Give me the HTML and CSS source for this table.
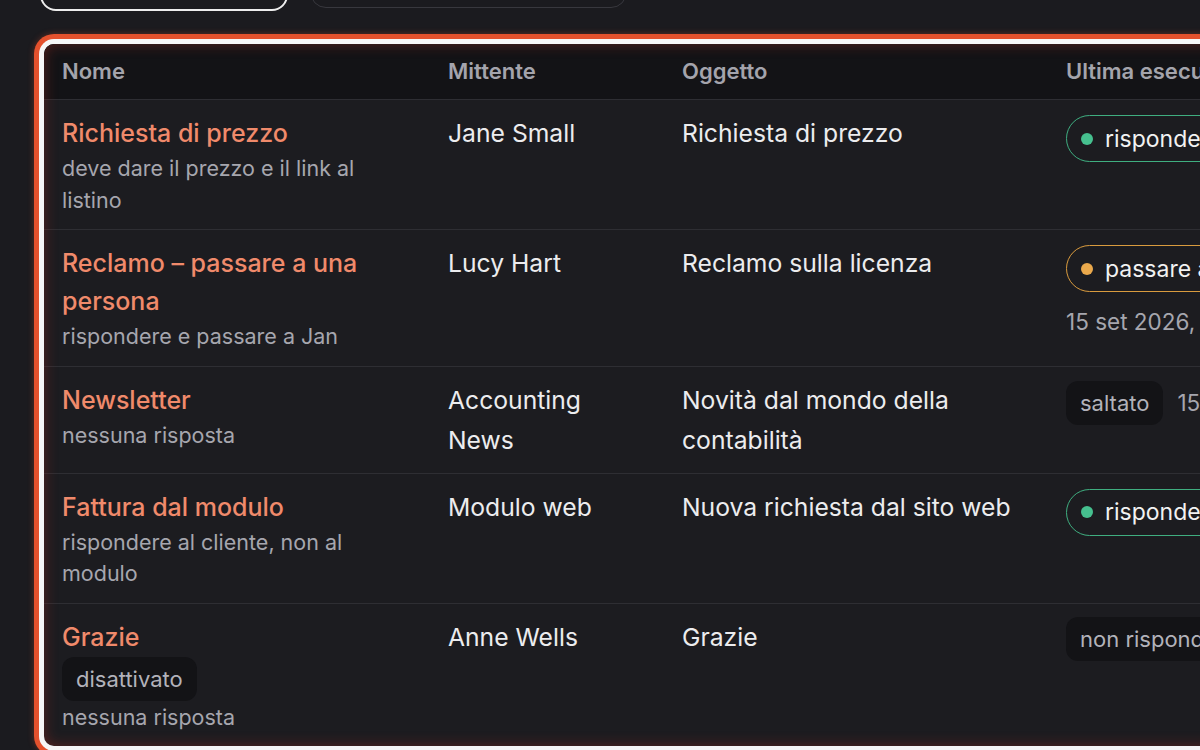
FILE: index.html
```html
<!DOCTYPE html>
<html lang="it">
<head>
<meta charset="utf-8">
<title>Regole</title>
<link rel="stylesheet" href="styles.css">
</head>
<body>
<div class="toolbar">
  <button class="tab tab-active" type="button">Regole</button>
  <button class="tab tab-plain" type="button">Cronologia</button>
</div>
<div class="card">
  <table class="rules">
    <colgroup>
      <col class="c-name"><col class="c-from"><col class="c-subj"><col class="c-last">
    </colgroup>
    <thead>
      <tr><th>Nome</th><th>Mittente</th><th>Oggetto</th><th>Ultima esecuzione</th></tr>
    </thead>
    <tbody>
      <tr>
        <td><div class="title">Richiesta di prezzo</div><div class="sub">deve dare il prezzo e il link al listino</div></td>
        <td>Jane Small</td>
        <td>Richiesta di prezzo</td>
        <td class="last"><span class="pill pill-green"><span class="dot"></span>rispondere</span></td>
      </tr>
      <tr>
        <td><div class="title">Reclamo – passare a una persona</div><div class="sub">rispondere e passare a Jan</div></td>
        <td>Lucy Hart</td>
        <td>Reclamo sulla licenza</td>
        <td class="last"><span class="pill pill-amber"><span class="dot"></span>passare a una persona</span><div class="date">15 set 2026, 10:42</div></td>
      </tr>
      <tr>
        <td><div class="title">Newsletter</div><div class="sub">nessuna risposta</div></td>
        <td>Accounting News</td>
        <td>Novità dal mondo della contabilità</td>
        <td class="last"><div class="inline"><span class="tag">saltato</span><span class="when">15 set 2026, 09:12</span></div></td>
      </tr>
      <tr>
        <td><div class="title">Fattura dal modulo</div><div class="sub">rispondere al cliente, non al modulo</div></td>
        <td>Modulo web</td>
        <td>Nuova richiesta dal sito web</td>
        <td class="last"><span class="pill pill-green"><span class="dot"></span>rispondere</span></td>
      </tr>
      <tr>
        <td><div class="title">Grazie</div><span class="tag tag-block">disattivato</span><div class="sub">nessuna risposta</div></td>
        <td>Anne Wells</td>
        <td>Grazie</td>
        <td class="last"><span class="tag">non rispondere</span></td>
      </tr>
    </tbody>
  </table>
</div>
</body>
</html>
```

FILE: styles.css
```css
html, body {
  margin: 0;
  padding: 0;
  overflow: hidden;
  background: #1b1b1f;
}

body {
  font-family: Inter, "Noto Sans", sans-serif;
  color: #ececee;
  width: 1200px;
  height: 750px;
}

.toolbar {
  display: flex;
  align-items: flex-start;
  gap: 22px;
  margin: -40px 0 0 40px;
}

.tab {
  font-family: inherit;
  font-size: 20px;
  color: #e8e8ea;
  background: #1b1b1f;
  border-radius: 16px;
  padding: 0;
}

.tab-active {
  width: 248px;
  height: 51px;
  border: 2px solid #ededed;
}

.tab-plain {
  width: 317px;
  height: 48px;
  border: 1.5px solid #38383e;
}

.card {
  position: relative;
  margin: 33px 0 0 44px;
  width: 1400px;
  background: #1c1c20;
  border-radius: 10px;
  overflow: hidden;
  box-shadow:
    0 0 0 5px #f6f6f6,
    0 0 0 10px #e4512d,
    0 0 6px 10px rgba(228, 81, 45, 0.35);
}

.card::after {
  content: "";
  position: absolute;
  inset: 0;
  border-radius: 10px;
  pointer-events: none;
  box-shadow: inset 0 0 14px rgba(170, 45, 30, 0.45);
}

.rules {
  width: 1400px;
  table-layout: fixed;
  border-collapse: collapse;
}

.c-name { width: 386px; }
.c-from { width: 234px; }
.c-subj { width: 384px; }

.rules th {
  background: #131316;
  color: #a4a4ac;
  font-size: 22px;
  font-weight: 600;
  line-height: 29px;
  text-align: left;
  padding: 13px 18px;
  border-bottom: 1px solid #2e2e33;
  white-space: nowrap;
}

.rules td {
  vertical-align: top;
  padding: 13px 18px;
  font-size: 24.7px;
  line-height: 40px;
  color: #ececee;
  border-bottom: 1px solid #2e2e33;
}

.rules tbody tr:last-child td {
  border-bottom: none;
}

.title {
  color: #f08a6b;
  font-size: 25px;
  font-weight: 500;
  line-height: 38px;
  padding: 1px 0;
}

.sub {
  color: #a6a6ae;
  font-size: 21.5px;
  line-height: 31.5px;
}

.last {
  white-space: nowrap;
}

.pill {
  display: inline-flex;
  align-items: center;
  gap: 12px;
  height: 47px;
  box-sizing: border-box;
  margin-top: 2px;
  padding: 0 20px 0 14px;
  border-radius: 24px;
  border: 1.5px solid;
  color: #f2f2f2;
  font-size: 23px;
  vertical-align: top;
}

.dot {
  width: 12px;
  height: 12px;
  border-radius: 50%;
}

.pill-green { border-color: #3fae80; }
.pill-green .dot { background: #46c08f; }

.pill-amber { border-color: #d99b3e; }
.pill-amber .dot { background: #eaa94c; }

.date {
  color: #a6a6ae;
  font-size: 22.5px;
  line-height: 36px;
  margin-top: 12px;
}

.inline {
  display: flex;
  align-items: center;
  gap: 14px;
  margin-top: 1px;
}

.when {
  color: #a6a6ae;
  font-size: 22.5px;
}

.tag {
  display: inline-flex;
  align-items: center;
  height: 44px;
  box-sizing: border-box;
  padding: 0 14px;
  border-radius: 12px;
  background: #131316;
  color: #b2b2ba;
  font-size: 22px;
  vertical-align: top;
}

.tag-block {
  display: flex;
  width: max-content;
  margin: 0 0 1px;
}
```
